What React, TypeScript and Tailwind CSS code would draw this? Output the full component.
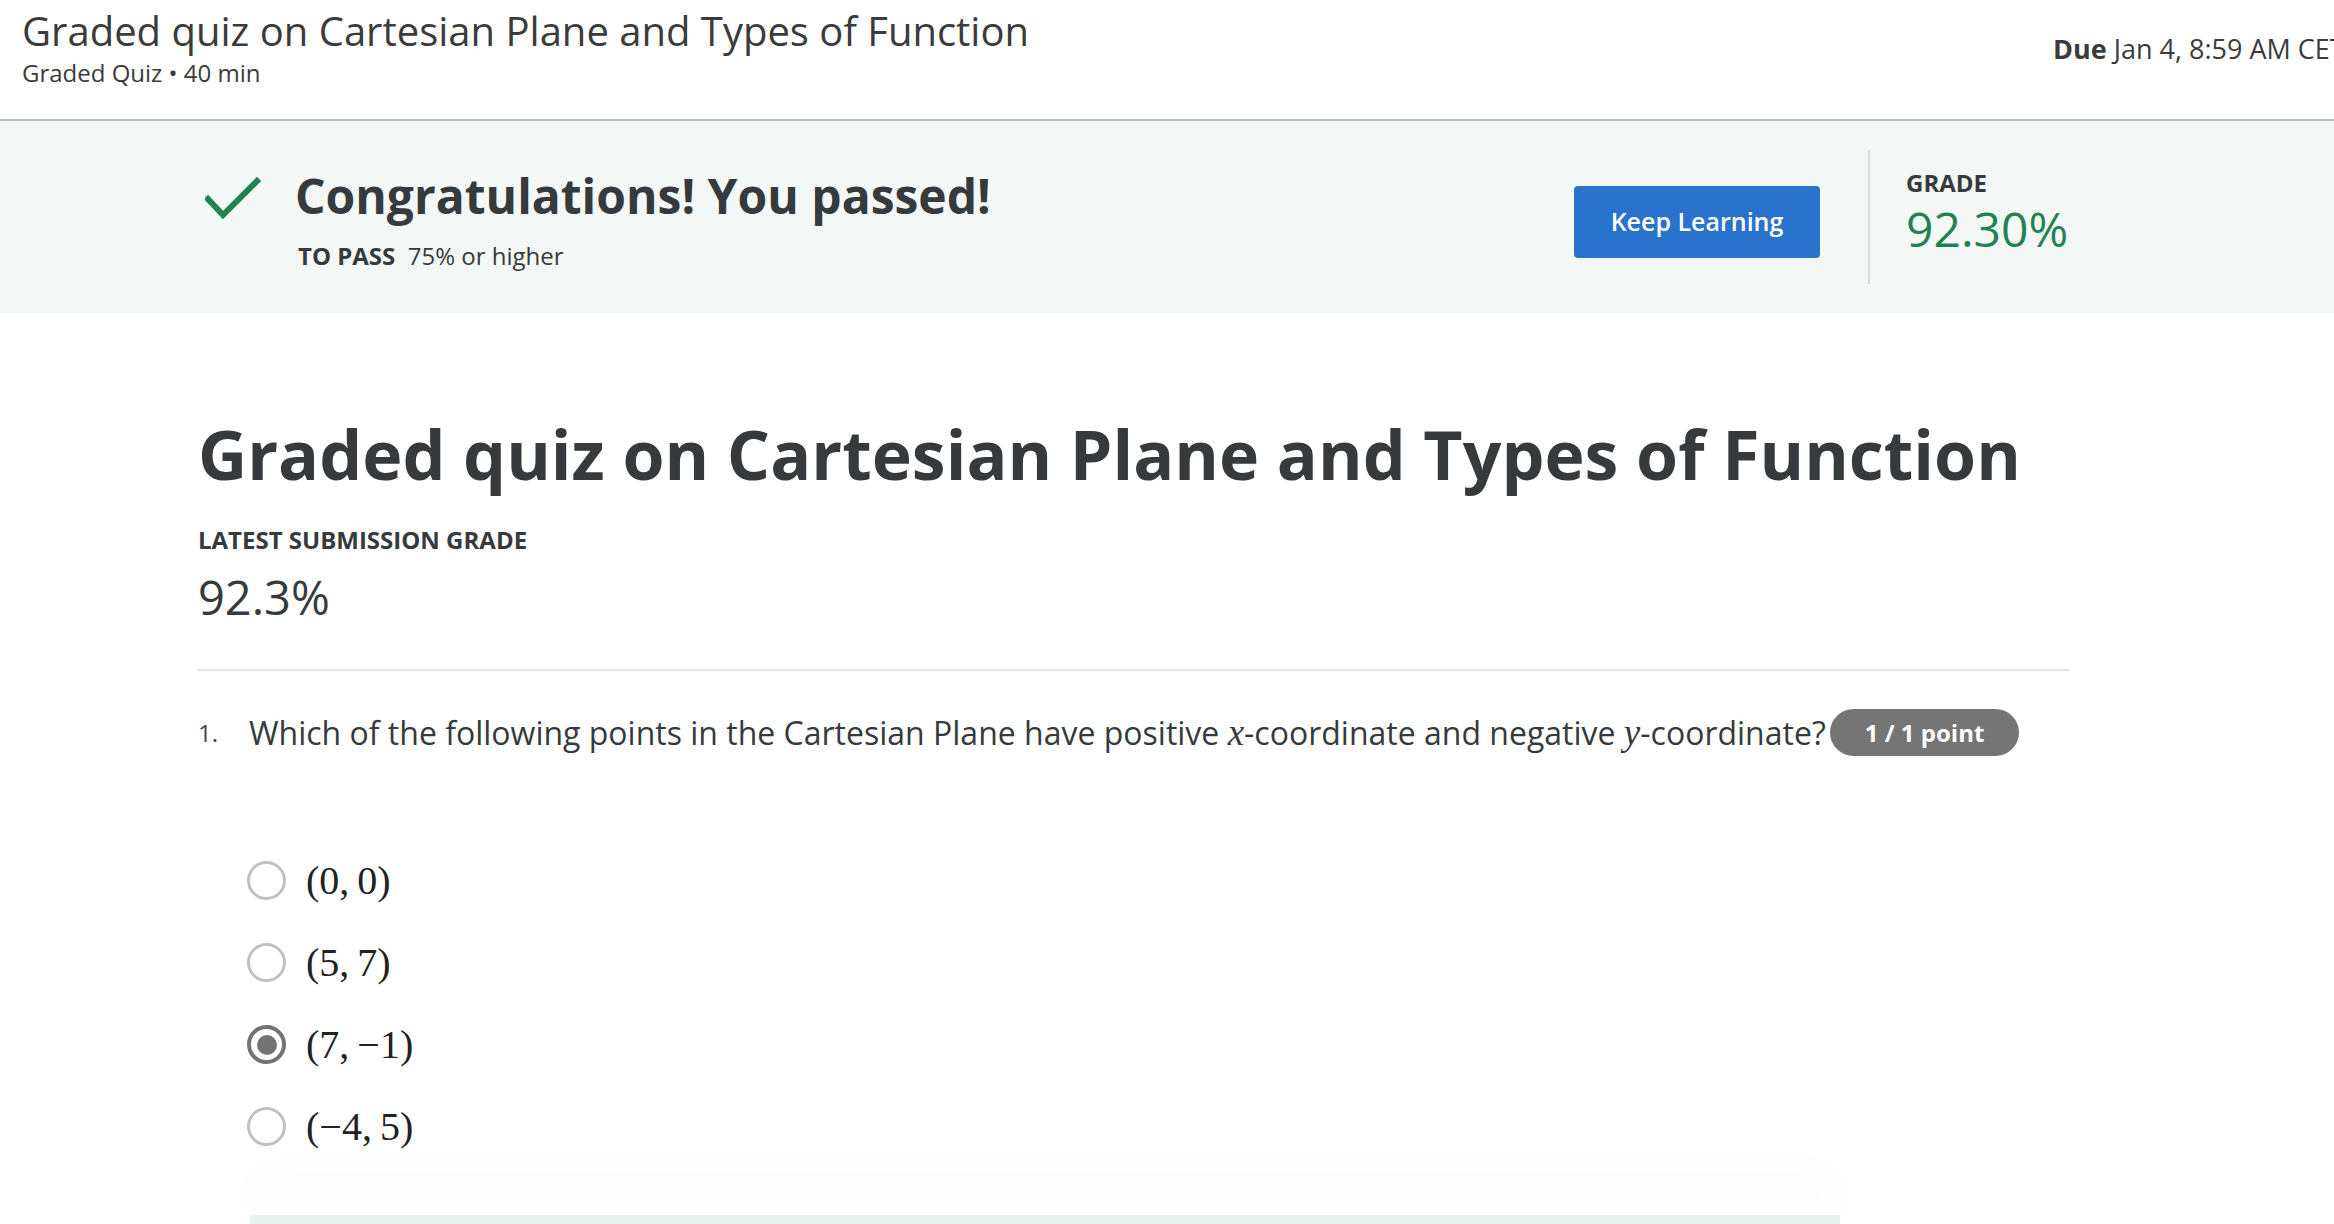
import React from "react";

const options = [
  { label: "(0,\u20090)", checked: false },
  { label: "(5,\u20097)", checked: false },
  { label: "(7,\u2009\u22121)", checked: true },
  { label: "(\u22124,\u20095)", checked: false },
];

function CheckIcon() {
  return (
    <svg width="57" height="44" viewBox="0 0 57 44" fill="none">
      <polyline
        points="3,22 18,38 52,4"
        stroke="#1f8354"
        strokeWidth="6"
        strokeLinecap="square"
        strokeLinejoin="miter"
      />
    </svg>
  );
}

function Radio({ checked }: { checked: boolean }) {
  if (checked) {
    return (
      <div className="w-[39px] h-[39px] rounded-full border-[4px] border-[#737373] flex items-center justify-center shrink-0">
        <div className="w-[20px] h-[20px] rounded-full bg-[#737373]" />
      </div>
    );
  }
  return <div className="w-[39px] h-[39px] rounded-full border-[3px] border-[#c1c1c1] shrink-0" />;
}

export default function App() {
  return (
    <div className="w-[2334px] h-[1224px] overflow-hidden bg-white text-[#373a3c] font-['Open_Sans',sans-serif]">
      {/* top header */}
      <header className="h-[121px] flex border-b-2 border-[#bdbdbd]">
        <div className="flex-1 pl-[22px] pt-[7px]">
          <h1 className="text-[40px] leading-[48px] text-[#3b3b3b]">
            Graded quiz on Cartesian Plane and Types of Function
          </h1>
          <p className="mt-[4px] text-[24px] leading-[28px] text-[#3b3b3b]">Graded Quiz • 40 min</p>
        </div>
        <div className="w-[281px] pt-[33px] overflow-hidden whitespace-nowrap text-[27px] leading-[32px] text-[#3b3b3b]">
          <span className="font-bold">Due</span> Jan 4, 8:59 AM CET
        </div>
      </header>

      {/* result banner */}
      <section className="h-[192px] bg-[#f3f8f6]">
        <div className="ml-[198px] w-[1871px] h-full flex items-center">
          <div className="flex-1">
            <div className="flex items-center">
              <div className="ml-[7px] mt-[6px]">
                <CheckIcon />
              </div>
              <h2 className="ml-[33px] text-[48px] leading-[64px] font-bold text-[#373a3c]">
                Congratulations! You passed!
              </h2>
            </div>
            <p className="ml-[100px] mt-[14px] text-[24px] leading-[28px]">
              <span className="font-bold">TO PASS</span>&nbsp; 75% or higher
            </p>
          </div>
          <button className="mt-[10px] w-[246px] h-[72px] rounded-[4px] bg-[#2a73cc] text-white text-[25px] font-semibold">
            Keep Learning
          </button>
          <div className="ml-[48px] w-[2px] h-[134px] bg-[#dcdcdc]" />
          <div className="ml-[36px] w-[163px] -mt-[6px]">
            <div className="text-[24px] leading-[28px] font-bold">GRADE</div>
            <div className="mt-[2px] text-[48px] leading-[60px] text-[#1f8354]">92.30%</div>
          </div>
        </div>
      </section>

      {/* quiz body */}
      <main className="ml-[198px] w-[1871px] pt-[101px]">
        <h1 className="text-[68px] leading-[80px] font-bold text-[#373a3c]">
          Graded quiz on Cartesian Plane and Types of Function
        </h1>
        <div className="mt-[32px] text-[24px] leading-[28px] font-bold">LATEST SUBMISSION GRADE</div>
        <div className="mt-[13px] text-[47px] leading-[60px]">92.3%</div>
        <div className="mt-[42px] h-[2px] bg-[#e5e5e5]" />

        <div className="mt-[38px] flex items-center">
          <span className="w-[51px] text-[24px] leading-[40px] text-[#444]">1.</span>
          <p className="text-[32px] leading-[40px] whitespace-nowrap">
            Which of the following points in the Cartesian Plane have positive{" "}
            <span className="font-['Liberation_Serif',serif] italic text-[37px]">x</span>-coordinate and negative{" "}
            <span className="font-['Liberation_Serif',serif] italic text-[37px]">y</span>-coordinate?
          </p>
          <span className="ml-[4px] h-[47px] px-[35px] rounded-full bg-[#757575] text-white text-[24px] font-bold flex items-center whitespace-nowrap">
            1 / 1 point
          </span>
        </div>

        <div className="mt-[105px] ml-[49px] flex flex-col gap-[43px]">
          {options.map((o) => (
            <div key={o.label} className="flex items-center h-[39px]">
              <Radio checked={o.checked} />
              <span className="ml-[20px] font-['Liberation_Serif',serif] text-[40px] leading-[39px] text-[#222]">
                {o.label}
              </span>
            </div>
          ))}
        </div>

        <div className="mt-[69px] ml-[52px] w-[1590px] h-[20px] bg-[#eaf1ef] shadow-[0_-30px_60px_rgba(0,0,0,0.04)]" />
      </main>
    </div>
  );
}
